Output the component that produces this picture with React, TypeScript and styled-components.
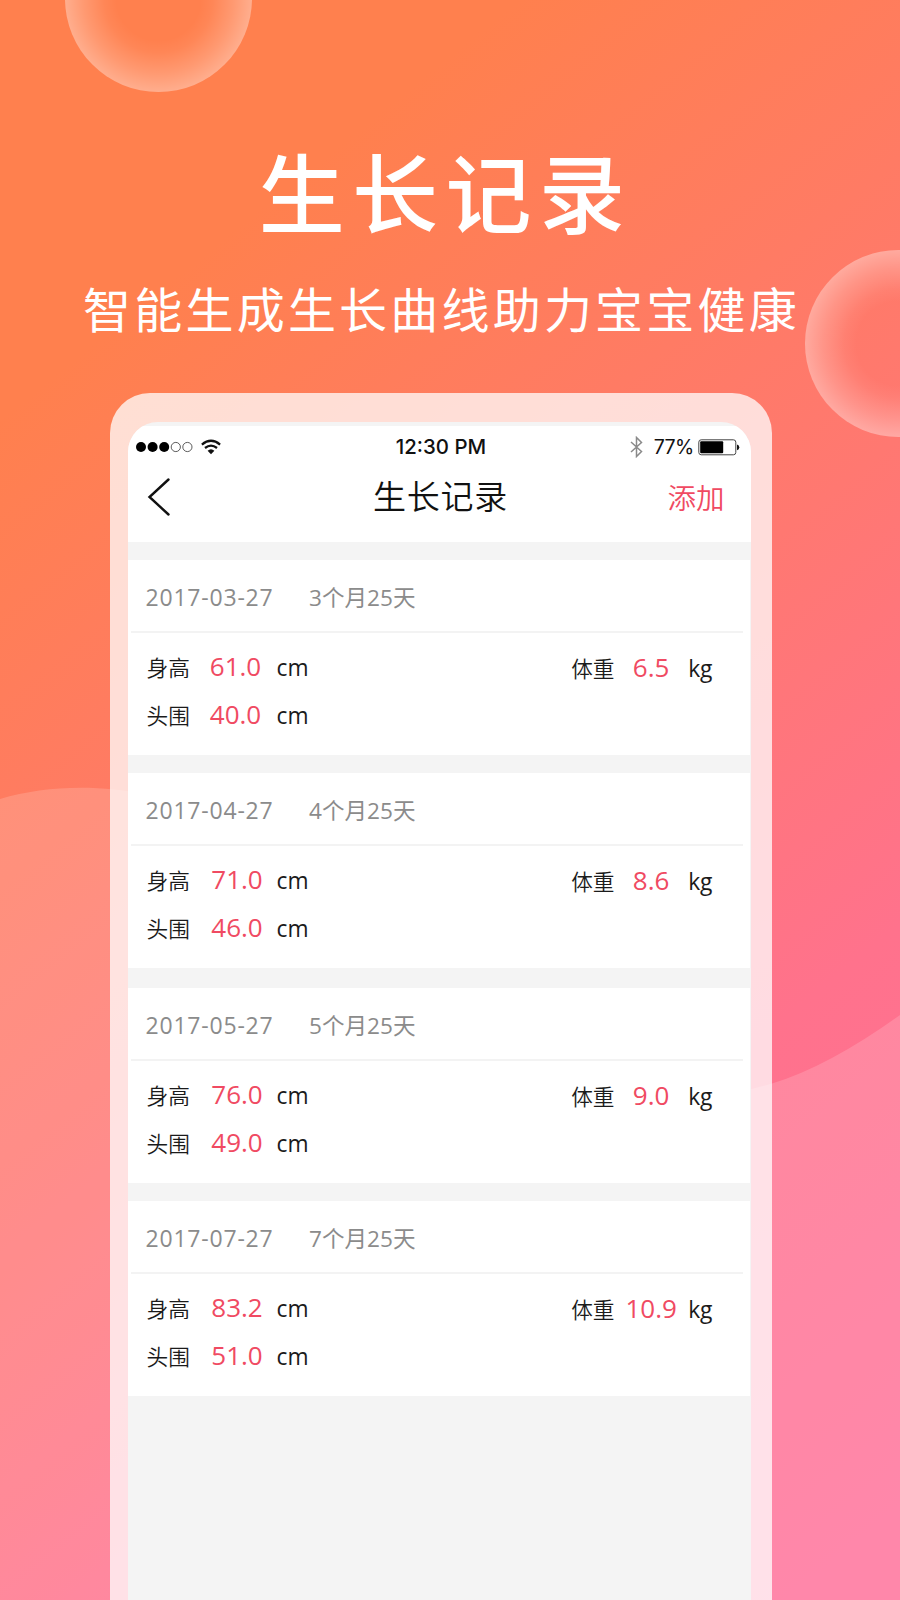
import React from "react";
import styled, { createGlobalStyle } from "styled-components";

const GlobalStyle = createGlobalStyle`
  body { margin: 0; }
  * { box-sizing: border-box; }
`;

const cjk = `"Noto Sans CJK SC", sans-serif`;
const mixed = `"Open Sans", "Noto Sans CJK SC", sans-serif`;

const Poster = styled.main`
  position: relative;
  width: 900px;
  height: 1600px;
  overflow: hidden;
  display: flex;
  flex-direction: column;
  align-items: center;
  background: linear-gradient(141deg, #ff804e 0%, #ff804e 18%, #ff7b64 38%, #ff7871 50%, #ff728c 71%, #ff709a 96%);
  font-family: ${mixed};
`;

const Backdrop = styled.svg`
  position: absolute;
  inset: 0;
`;

const Bubble = styled.div<{ $x: number; $y: number }>`
  position: absolute;
  left: ${(p) => p.$x}px;
  top: ${(p) => p.$y}px;
  width: 187px;
  height: 187px;
  border-radius: 50%;
  background: radial-gradient(
    circle closest-side,
    rgba(255, 255, 255, 0) 45%,
    rgba(255, 255, 255, 0.05) 58%,
    rgba(255, 255, 255, 0.2) 80%,
    rgba(255, 255, 255, 0.36) 100%
  );
`;

const Heading = styled.h1`
  position: relative;
  margin: 140px 0 0 -13px;
  height: 100px;
  padding-left: 4px;
  font: 500 86px/100px ${cjk};
  letter-spacing: 7.4px;
  color: #fff;
  white-space: nowrap;
`;

const Subheading = styled.p`
  position: relative;
  margin: 37px 0 0 -17px;
  height: 60px;
  font: 400 48px/60px ${cjk};
  letter-spacing: 3.2px;
  color: #fff;
  white-space: nowrap;
`;

const Phone = styled.section`
  position: relative;
  width: 662px;
  height: 1207px;
  margin: 56px 0 0 -19px;
  padding: 29px 21px 0 18px;
  border-radius: 40px 40px 0 0;
  background: rgba(255, 255, 255, 0.75);
`;

const Screen = styled.div`
  height: 100%;
  padding-top: 4px;
  border-radius: 30px 30px 0 0;
  overflow: hidden;
  background: #f4f4f4;
`;

const TopBar = styled.header`
  height: 116px;
  background: #fff;
`;

const StatusBar = styled.div`
  display: grid;
  grid-template-columns: 1fr auto 1fr;
  align-items: center;
  height: 42px;
  padding: 0 11px 0 7px;
  color: #111;
`;

const StatusSide = styled.div<{ $end?: boolean }>`
  display: flex;
  align-items: center;
  justify-content: ${(p) => (p.$end ? "flex-end" : "flex-start")};
`;

const Clock = styled.span`
  margin-left: 8px;
  font: 500 20.4px/42px Inter, sans-serif;
`;

const Battery = styled.span`
  margin: 0 4px 0 11px;
  font: 400 19.6px/42px Inter, sans-serif;
  letter-spacing: -0.7px;
`;

const NavBar = styled.div`
  display: grid;
  grid-template-columns: 1fr auto 1fr;
  align-items: center;
  height: 58px;
  padding: 0 26px 0 18px;
`;

const NavTitle = styled.h2`
  margin: -3px 0 0 11px;
  font: 350 33px/55px ${cjk};
  letter-spacing: 0.8px;
  color: #111;
`;

const AddButton = styled.button`
  justify-self: end;
  padding: 0;
  border: 0;
  background: none;
  font: 350 28.5px/58px ${cjk};
  color: #f04a62;
`;

const Records = styled.div`
  display: flex;
  flex-direction: column;
  padding: 18px 1px 0 0;
`;

const Card = styled.article<{ $gap: number }>`
  height: 195px;
  margin-bottom: ${(p) => p.$gap}px;
  background: #fff;
`;

const CardHead = styled.div`
  display: flex;
  align-items: baseline;
  height: 73px;
  margin: 0 7px 0 3px;
  padding: 21px 0 0 15px;
  border-bottom: 2px solid #f3f3f3;
  font-size: 23px;
  line-height: 32px;
  color: #8b8b8b;
`;

const DateText = styled.time`
  width: 163.5px;
  letter-spacing: 0.8px;
`;

const Age = styled.span`
  font-size: 22.6px;
`;

const Measures = styled.div`
  display: flex;
  justify-content: space-between;
  padding: 11px 37px 0 19px;
`;

const Column = styled.div`
  display: flex;
  flex-direction: column;
`;

const Measure = styled.div<{ $drop?: boolean }>`
  display: flex;
  align-items: baseline;
  height: 48px;
  padding-top: ${(p) => (p.$drop ? 1 : 0)}px;
  line-height: 44px;
  color: #1b1b1b;
`;

const Label = styled.span`
  width: 43px;
  font: 350 21.7px/44px ${cjk};
  white-space: nowrap;
`;

const Value = styled.span<{ $narrow?: boolean; $inset?: number }>`
  width: ${(p) => (p.$narrow ? 74 : 87)}px;
  padding-left: ${(p) => p.$inset ?? 0}px;
  text-align: center;
  font-size: 26px;
  color: #f04a62;
`;

const Unit = styled.span`
  font-size: 22.8px;
`;

const records = [
  { date: "2017-03-27", age: "3个月25天", height: "61.0", head: "40.0", weight: "6.5", inset: 5, gap: 18 },
  { date: "2017-04-27", age: "4个月25天", height: "71.0", head: "46.0", weight: "8.6", inset: 8, gap: 20 },
  { date: "2017-05-27", age: "5个月25天", height: "76.0", head: "49.0", weight: "9.0", inset: 8, gap: 18 },
  { date: "2017-07-27", age: "7个月25天", height: "83.2", head: "51.0", weight: "10.9", inset: 8, gap: 0 },
];

const SignalIcon = () => (
  <svg width="58" height="12" viewBox="0 0 58 12">
    {[0, 1, 2, 3, 4].map((i) => (
      <circle
        key={i}
        cx={6 + i * 11.6}
        cy="6"
        r={i < 3 ? 5 : 4.6}
        fill={i < 3 ? "#000" : "none"}
        stroke={i < 3 ? "none" : "#333"}
        strokeWidth="0.8"
      />
    ))}
  </svg>
);

const WifiSvg = styled.svg`
  margin-left: 8px;
`;

const WifiIcon = () => (
  <WifiSvg width="20" height="16" viewBox="0 0 20 16" fill="none" stroke="#111" strokeWidth="2.3">
    <path d="M0.9 5.6Q10-2 19.1 5.6" />
    <path d="M4 9Q10 4.2 16 9" />
    <path d="M6.6 11.8Q10 8.8 13.4 11.8L10 15.2Z" fill="#111" stroke="none" />
  </WifiSvg>
);

const BluetoothIcon = () => (
  <svg width="13" height="22" viewBox="0 0 13 22" fill="none" stroke="#8a8a8a" strokeWidth="1.5">
    <path d="M1 6L11.5 15.5L6.5 20.5V1.5L11.5 6.5L1 16" />
  </svg>
);

const BatteryIcon = () => (
  <svg width="42" height="17" viewBox="0 0 42 17">
    <rect x="0.8" y="0.8" width="37" height="15" rx="2.4" fill="none" stroke="#444" strokeWidth="1" />
    <rect x="2.2" y="2.3" width="23" height="12" rx="1" fill="#000" />
    <path d="M39 5.5Q41.3 6 41.3 8.3T39 11.2Z" fill="#111" />
  </svg>
);

const BackIcon = () => (
  <svg width="26" height="40" viewBox="0 0 26 40" fill="none" stroke="#111" strokeWidth="2.4" strokeLinecap="round">
    <path d="M22.5 2.5L3.5 20L22.5 37.5" />
  </svg>
);

export default function App() {
  return (
    <Poster>
      <GlobalStyle />
      <Backdrop width="900" height="1600" viewBox="0 0 900 1600">
        <path
          d="M0 799C45 786 95 784 150 795C300 830 400 1090 600 1104Q690 1108 772 1083.5Q828 1066.7 900 1015V1600H0Z"
          fill="#fff"
          fillOpacity="0.16"
        />
      </Backdrop>
      <Bubble $x={65} $y={-95} />
      <Bubble $x={805} $y={250} />
      <Heading>生长记录</Heading>
      <Subheading>智能生成生长曲线助力宝宝健康</Subheading>
      <Phone>
        <Screen>
          <TopBar>
            <StatusBar>
              <StatusSide>
                <SignalIcon />
                <WifiIcon />
              </StatusSide>
              <Clock>12:30 PM</Clock>
              <StatusSide $end>
                <BluetoothIcon />
                <Battery>77%</Battery>
                <BatteryIcon />
              </StatusSide>
            </StatusBar>
            <NavBar>
              <BackIcon />
              <NavTitle>生长记录</NavTitle>
              <AddButton>添加</AddButton>
            </NavBar>
          </TopBar>
          <Records>
            {records.map((r) => (
              <Card key={r.date} $gap={r.gap}>
                <CardHead>
                  <DateText>{r.date}</DateText>
                  <Age>{r.age}</Age>
                </CardHead>
                <Measures>
                  <Column>
                    <Measure>
                      <Label>身高</Label>
                      <Value $inset={r.inset}>{r.height}</Value>
                      <Unit>cm</Unit>
                    </Measure>
                    <Measure>
                      <Label>头围</Label>
                      <Value $inset={r.inset}>{r.head}</Value>
                      <Unit>cm</Unit>
                    </Measure>
                  </Column>
                  <Measure $drop>
                    <Label>体重</Label>
                    <Value $narrow>{r.weight}</Value>
                    <Unit>kg</Unit>
                  </Measure>
                </Measures>
              </Card>
            ))}
          </Records>
        </Screen>
      </Phone>
    </Poster>
  );
}
